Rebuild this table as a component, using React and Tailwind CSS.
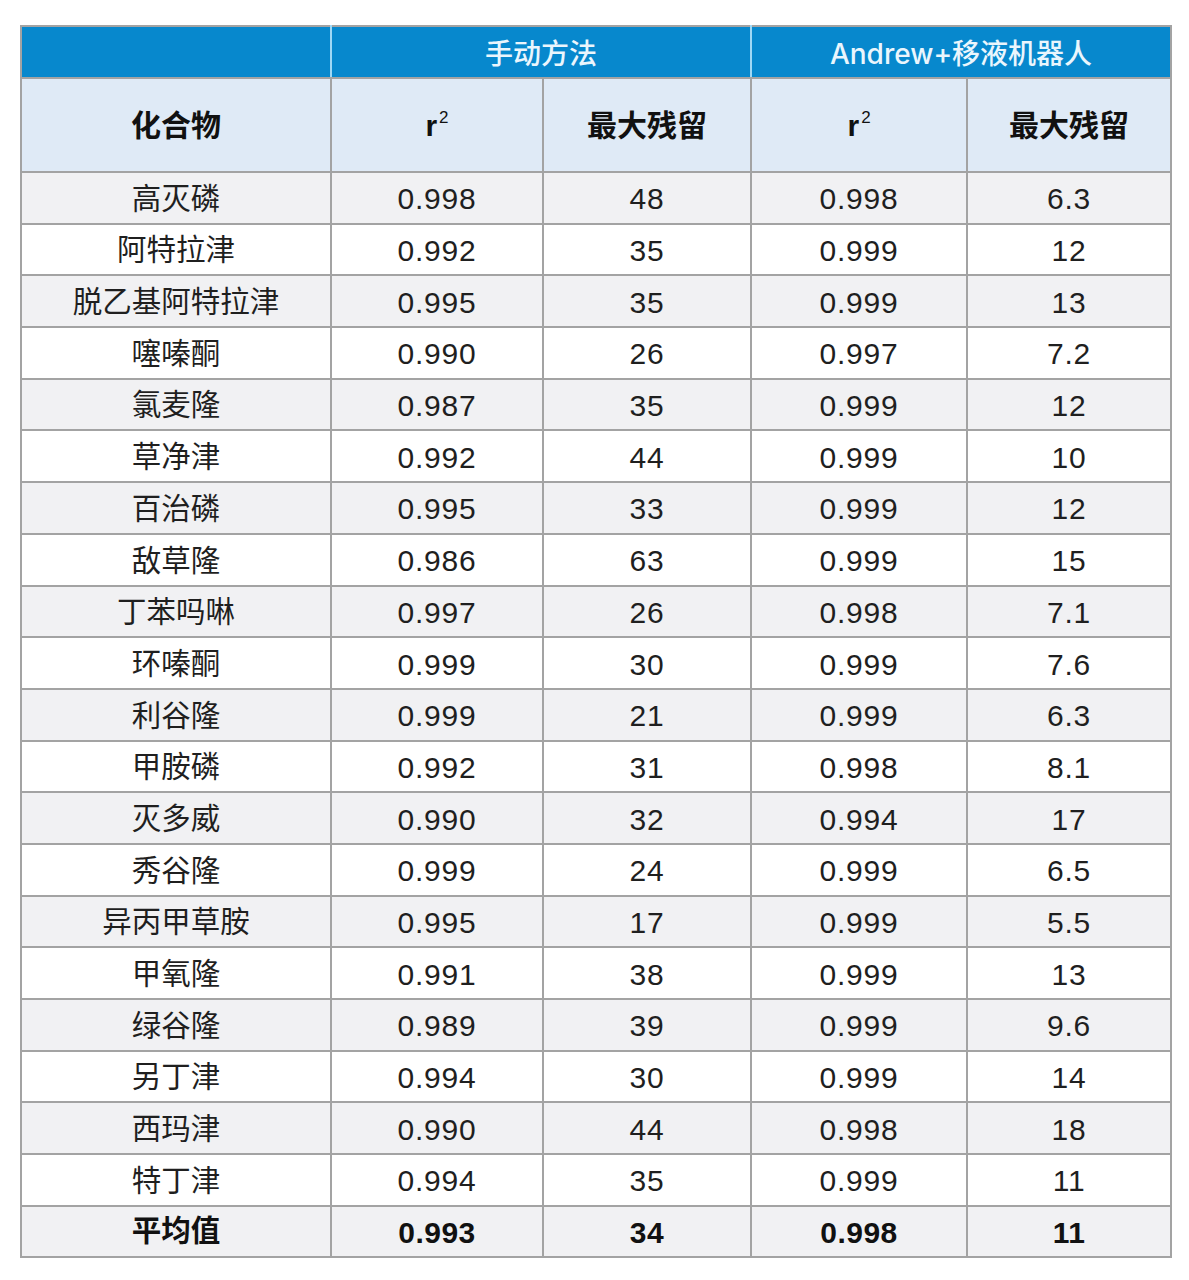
import React from 'react';

const rows = [
  ['高灭磷', '0.998', '48', '0.998', '6.3'],
  ['阿特拉津', '0.992', '35', '0.999', '12'],
  ['脱乙基阿特拉津', '0.995', '35', '0.999', '13'],
  ['噻嗪酮', '0.990', '26', '0.997', '7.2'],
  ['氯麦隆', '0.987', '35', '0.999', '12'],
  ['草净津', '0.992', '44', '0.999', '10'],
  ['百治磷', '0.995', '33', '0.999', '12'],
  ['敌草隆', '0.986', '63', '0.999', '15'],
  ['丁苯吗啉', '0.997', '26', '0.998', '7.1'],
  ['环嗪酮', '0.999', '30', '0.999', '7.6'],
  ['利谷隆', '0.999', '21', '0.999', '6.3'],
  ['甲胺磷', '0.992', '31', '0.998', '8.1'],
  ['灭多威', '0.990', '32', '0.994', '17'],
  ['秀谷隆', '0.999', '24', '0.999', '6.5'],
  ['异丙甲草胺', '0.995', '17', '0.999', '5.5'],
  ['甲氧隆', '0.991', '38', '0.999', '13'],
  ['绿谷隆', '0.989', '39', '0.999', '9.6'],
  ['另丁津', '0.994', '30', '0.999', '14'],
  ['西玛津', '0.990', '44', '0.998', '18'],
  ['特丁津', '0.994', '35', '0.999', '11'],
];

const font = "font-['Liberation_Sans','Noto_Sans_CJK_SC',sans-serif]";
const cell = 'border-2 border-[#a3a3a3]';

function R2() {
  return (
    <span>
      r<sup className="text-[17px] font-normal -top-[0.75em] ml-[2px]">2</sup>
    </span>
  );
}

export default function App() {
  return (
    <div className={`bg-white min-h-[1280px] pt-[25px] pl-[20px] ${font}`}>
      <table className="border-collapse table-fixed w-[1150px] text-[#1f1f1f] text-center">
        <colgroup>
          <col className="w-[310px]" />
          <col className="w-[212px]" />
          <col className="w-[208px]" />
          <col className="w-[216px]" />
          <col className="w-[204px]" />
        </colgroup>
        <thead>
          {/* 顶部蓝色表头 */}
          <tr className="h-[52px] bg-[#0788cd] text-[#eaf6fd] text-[28px] font-['Inter','Noto_Sans_CJK_SC',sans-serif]">
            <th className={`${cell} border-r-[#9fd8f5]`}></th>
            <th colSpan={2} className={`${cell} border-r-[#9fd8f5] font-medium pt-[4px]`}>手动方法</th>
            <th colSpan={2} className={`${cell} font-medium pt-[4px]`}>Andrew+移液机器人</th>
          </tr>
          <tr className="h-[94px] bg-[#dfeaf6] text-[30px] font-bold text-[#111]">
            <th className={cell}>化合物</th>
            <th className={cell}><R2 /></th>
            <th className={cell}>最大残留</th>
            <th className={cell}><R2 /></th>
            <th className={cell}>最大残留</th>
          </tr>
        </thead>
        <tbody>
          {rows.map((r, i) => (
            <tr key={i} className={`h-[51.7px] ${i % 2 === 0 ? 'bg-[#f1f1f3]' : 'bg-white'}`}>
              <td className={`${cell} text-[29.5px] pt-[2px]`}>{r[0]}</td>
              {r.slice(1).map((v, j) => (
                <td key={j} className={`${cell} text-[30px] tracking-[0.8px] pt-[2px]`}>{v}</td>
              ))}
            </tr>
          ))}
          <tr className="h-[51.7px] bg-[#f1f1f3] font-bold text-[#111]">
            <td className={`${cell} text-[29.5px]`}>平均值</td>
            <td className={`${cell} text-[30px] tracking-[0.5px] pt-[2px]`}>0.993</td>
            <td className={`${cell} text-[30px] tracking-[0.5px] pt-[2px]`}>34</td>
            <td className={`${cell} text-[30px] tracking-[0.5px] pt-[2px]`}>0.998</td>
            <td className={`${cell} text-[30px] tracking-[0.5px] pt-[2px]`}>11</td>
          </tr>
        </tbody>
      </table>
    </div>
  );
}
